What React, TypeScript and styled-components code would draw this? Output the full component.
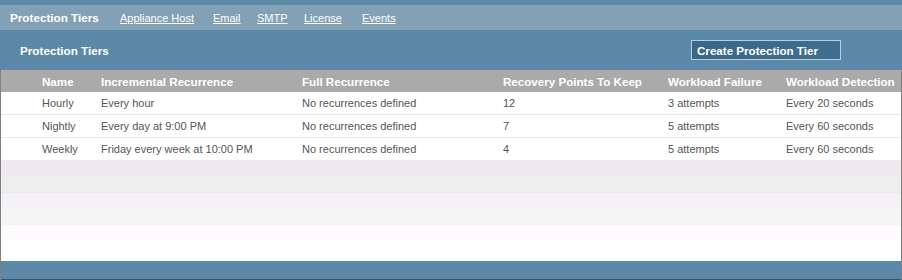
import React from "react";
import styled, { createGlobalStyle } from "styled-components";

const GlobalStyle = createGlobalStyle`
  body {
    margin: 0;
    background: #ffffff;
    font-family: "Liberation Sans", Arial, sans-serif;
  }
`;

const Page = styled.div`
  width: 902px;
  height: 280px;
  overflow: hidden;
  display: flex;
  flex-direction: column;
`;

const TopStrip = styled.div`
  height: 5px;
  background: #5b89a7;
`;

const NavBar = styled.nav`
  height: 25px;
  background: #82a1b5;
  display: flex;
  align-items: center;
  padding-left: 10px;
`;

// each tab keeps the slot width of the original page
const NavItem = styled.a<{ $active?: boolean; $w?: number }>`
  flex: none;
  width: ${(p) => (p.$w ? `${p.$w}px` : "auto")};
  color: #ffffff;
  font-size: ${(p) => (p.$active ? "11.7px" : "11px")};
  font-weight: ${(p) => (p.$active ? 700 : 400)};
  text-decoration: ${(p) => (p.$active ? "none" : "underline")};
  cursor: pointer;
  white-space: nowrap;
`;

const PanelHeader = styled.div`
  height: 40px;
  background: #5b89a7;
  display: flex;
  align-items: center;
  justify-content: space-between;
  padding: 0 61px 0 20px;
`;

const PanelTitle = styled.h2`
  margin: 0;
  color: #ffffff;
  font-size: 11.7px;
  font-weight: 700;
`;

const CreateButton = styled.button`
  width: 150px;
  height: 20px;
  box-sizing: border-box;
  border: 1px solid #b6cfe1;
  background: linear-gradient(to right, #3a6787, #3f6e8f);
  color: #ffffff;
  font-family: "Liberation Sans", Arial, sans-serif;
  font-size: 11.6px;
  font-weight: 700;
  text-align: left;
  padding: 0 0 0 5px;
`;

const TableBox = styled.div`
  flex: 1;
  display: flex;
  flex-direction: column;
  border-left: 1px solid #808080;
  border-right: 1px solid #808080;
`;

const columns = "100px 201px 201px 165px 118px 1fr";

const HeadRow = styled.div`
  display: grid;
  grid-template-columns: ${columns};
  height: 22px;
  align-items: center;
  background: #aaaaaa;
`;

const HeadCell = styled.div<{ $first?: boolean }>`
  color: #ffffff;
  font-size: 11.6px;
  font-weight: 700;
  white-space: nowrap;
  padding-left: ${(p) => (p.$first ? "41px" : "0")};
`;

const Row = styled.div<{ $last?: boolean }>`
  display: grid;
  grid-template-columns: ${columns};
  height: 22px;
  align-items: center;
  background: #ffffff;
  border-bottom: ${(p) => (p.$last ? "none" : "1px solid #e8e8e8")};
`;

const Cell = styled.div<{ $first?: boolean }>`
  color: #555555;
  font-size: 11px;
  white-space: nowrap;
  padding-left: ${(p) => (p.$first ? "41px" : "0")};
`;

const Filler = styled.div`
  flex: 1;
  background: linear-gradient(
    to bottom,
    #efeaee 0px,
    #efeaee 17px,
    #eeeeee 17px,
    #eeeeee 32px,
    #ecebf4 32px,
    #ecebf4 33px,
    #f5f2f5 33px,
    #f5f2f5 48px,
    #f5f5f5 48px,
    #f5f5f5 65px,
    #fefbfe 65px,
    #fefbfe 80px,
    #ffffff 80px
  );
`;

const Footer = styled.div`
  height: 18px;
  background: #5b89a7;
  border-bottom: 1px solid #3d5566;
`;

const tabs = [
  { label: "Appliance Host", w: 93 },
  { label: "Email", w: 44 },
  { label: "SMTP", w: 47 },
  { label: "License", w: 58 },
  { label: "Events", w: 60 },
];

const tiers = [
  { name: "Hourly", inc: "Every hour", full: "No recurrences defined", keep: "12", fail: "3 attempts", detect: "Every 20 seconds" },
  { name: "Nightly", inc: "Every day at 9:00 PM", full: "No recurrences defined", keep: "7", fail: "5 attempts", detect: "Every 60 seconds" },
  { name: "Weekly", inc: "Friday every week at 10:00 PM", full: "No recurrences defined", keep: "4", fail: "5 attempts", detect: "Every 60 seconds" },
];

const App: React.FC = () => {
  return (
    <Page>
      <GlobalStyle />
      <TopStrip />
      <NavBar>
        <NavItem $active $w={110}>Protection Tiers</NavItem>
        {tabs.map((t) => (
          <NavItem key={t.label} $w={t.w}>{t.label}</NavItem>
        ))}
      </NavBar>
      <PanelHeader>
        <PanelTitle>Protection Tiers</PanelTitle>
        <CreateButton>Create Protection Tier</CreateButton>
      </PanelHeader>
      <TableBox>
        <HeadRow>
          <HeadCell $first>Name</HeadCell>
          <HeadCell>Incremental Recurrence</HeadCell>
          <HeadCell>Full Recurrence</HeadCell>
          <HeadCell>Recovery Points To Keep</HeadCell>
          <HeadCell>Workload Failure</HeadCell>
          <HeadCell>Workload Detection</HeadCell>
        </HeadRow>
        {tiers.map((t, idx) => (
          <Row key={t.name} $last={idx === tiers.length - 1}>
            <Cell $first>{t.name}</Cell>
            <Cell>{t.inc}</Cell>
            <Cell>{t.full}</Cell>
            <Cell>{t.keep}</Cell>
            <Cell>{t.fail}</Cell>
            <Cell>{t.detect}</Cell>
          </Row>
        ))}
        <Filler />
        <Footer />
      </TableBox>
    </Page>
  );
};

export default App;
